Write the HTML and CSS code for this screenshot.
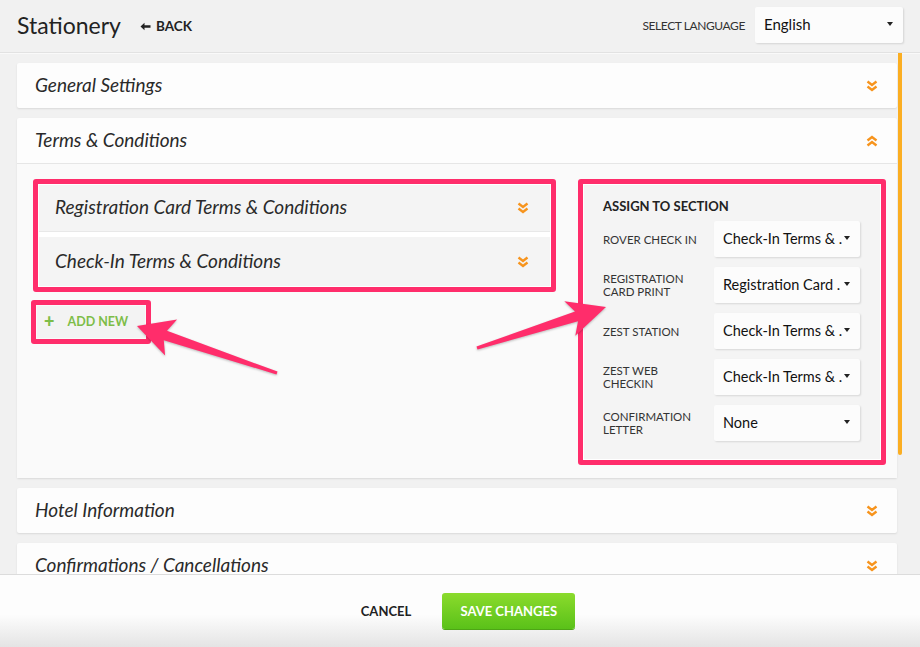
FILE: index.html
```html
<!doctype html>
<html>
<head>
  <meta charset="utf-8" />
  <title>Stationery</title>
  <link rel="stylesheet" href="styles.css">
</head>
<body>
  <div class="app">
    <header class="topbar">
      <div class="title-group">
        <h1>Stationery</h1>
        <a class="back" href="#">
          <svg width="11" height="9" viewBox="0 0 11 9"><path d="M0.5 4.5 L4.5 0.8 L4.5 3.3 L10.5 3.3 L10.5 5.7 L4.5 5.7 L4.5 8.2 Z" fill="#222"/></svg>
          BACK
        </a>
      </div>
      <div class="lang">
        <span class="lang-label">SELECT LANGUAGE</span>
        <div class="select lang-select"><span>English</span><i class="caret"></i></div>
      </div>
    </header>

    <main class="main">
      <div class="panels">
        <section class="panel">
          <div class="panel-head">
            <h2>General Settings</h2>
            <svg class="chev" viewBox="0 0 12 12"><path d="M1.5 1.5 L6 5 L10.5 1.5 M1.5 6.5 L6 10 L10.5 6.5"/></svg>
          </div>
        </section>

        <section class="panel open">
          <div class="panel-head">
            <h2>Terms &amp; Conditions</h2>
            <svg class="chev" viewBox="0 0 12 12"><path d="M1.5 5.5 L6 2 L10.5 5.5 M1.5 10.5 L6 7 L10.5 10.5"/></svg>
          </div>
          <div class="panel-body">
            <div class="left-col">
              <div class="mark list">
                <div class="item">
                  <span>Registration Card Terms &amp; Conditions</span>
                  <svg class="chev" viewBox="0 0 12 12"><path d="M1.5 1.5 L6 5 L10.5 1.5 M1.5 6.5 L6 10 L10.5 6.5"/></svg>
                </div>
                <div class="item">
                  <span>Check-In Terms &amp; Conditions</span>
                  <svg class="chev" viewBox="0 0 12 12"><path d="M1.5 1.5 L6 5 L10.5 1.5 M1.5 6.5 L6 10 L10.5 6.5"/></svg>
                </div>
              </div>
              <div class="mark add-wrap">
                <button class="add-new"><b>+</b>ADD NEW</button>
              </div>
            </div>

            <div class="mark assign">
              <div class="assign-inner">
                <h3>ASSIGN TO SECTION</h3>
                <div class="row"><label>ROVER CHECK IN</label><div class="select"><span>Check-In Terms &amp; .</span><i class="caret"></i></div></div>
                <div class="row"><label>REGISTRATION<br>CARD PRINT</label><div class="select"><span>Registration Card .</span><i class="caret"></i></div></div>
                <div class="row"><label>ZEST STATION</label><div class="select"><span>Check-In Terms &amp; .</span><i class="caret"></i></div></div>
                <div class="row"><label>ZEST WEB<br>CHECKIN</label><div class="select"><span>Check-In Terms &amp; .</span><i class="caret"></i></div></div>
                <div class="row"><label>CONFIRMATION<br>LETTER</label><div class="select"><span>None</span><i class="caret"></i></div></div>
              </div>
            </div>
          </div>
        </section>

        <section class="panel">
          <div class="panel-head">
            <h2>Hotel Information</h2>
            <svg class="chev" viewBox="0 0 12 12"><path d="M1.5 1.5 L6 5 L10.5 1.5 M1.5 6.5 L6 10 L10.5 6.5"/></svg>
          </div>
        </section>

        <section class="panel">
          <div class="panel-head">
            <h2>Confirmations / Cancellations</h2>
            <svg class="chev" viewBox="0 0 12 12"><path d="M1.5 1.5 L6 5 L10.5 1.5 M1.5 6.5 L6 10 L10.5 6.5"/></svg>
          </div>
        </section>
      </div>
      <div class="scroll-track"><div class="scroll-thumb"></div></div>
    </main>

    <footer class="footer">
      <button class="cancel">CANCEL</button>
      <button class="save">SAVE CHANGES</button>
    </footer>
  </div>

  <!-- annotation arrows -->
  <svg class="arrows" width="920" height="647" viewBox="0 0 920 647">
    <g fill="#ff2d6b">
      <polygon points="137,326 177.1,319.4 167,330.8 277.5,371.6 276.5,374.4 163.8,340.2 165.1,355.4"/>
      <polygon points="606,307 564.3,301.3 575,311.6 476.5,346.6 477.5,349.4 578,321.2 575.3,335.7"/>
    </g>
  </svg>
</body>
</html>
```

FILE: styles.css
```css
html, body {
  margin: 0;
  height: 100%;
}
body {
  font-family: Lato, "Open Sans", sans-serif;
  color: #222;
  background: #f1f1f1;
  position: relative;
  overflow: hidden;
}
.app {
  height: 647px;
  display: flex;
  flex-direction: column;
}

/* top bar */
.topbar {
  height: 50px;
  padding: 0 17px 2px;
  flex: none;
  display: flex;
  align-items: center;
  justify-content: space-between;
  border-bottom: 1px solid #e2e2e2;
  box-shadow: 0 1px 0 #f9f9f9;
}
.title-group {
  display: flex;
  align-items: center;
}
h1 {
  font-size: 23px;
  font-weight: 400;
  margin: 0 19px 0 0;
  color: #222;
}
.back {
  display: flex;
  align-items: center;
  gap: 5px;
  font-size: 13.5px;
  font-weight: 700;
  color: #222;
  text-decoration: none;
  margin-top: 2px;
}
.lang {
  display: flex;
  align-items: center;
  gap: 10px;
}
.lang-label {
  font-size: 12px;
  letter-spacing: -0.4px;
  color: #333;
}
.select {
  background: #fcfcfc;
  box-shadow: 1px 1px 2px rgba(0, 0, 0, 0.12);
  border-radius: 2px;
  height: 36px;
  display: flex;
  align-items: center;
  justify-content: space-between;
  padding: 0 10px 2px 9px;
  box-sizing: border-box;
  font-size: 14.5px;
  color: #111;
}
.lang-select {
  width: 148px;
  font-size: 15px;
}
.caret {
  width: 0;
  height: 0;
  border-left: 3px solid transparent;
  border-right: 3px solid transparent;
  border-top: 4px solid #222;
}

/* main area */
.main {
  flex: 1;
  overflow: hidden;
  display: flex;
  padding: 10px 0 0 17px;
}
.panels {
  width: 880px;
  flex: none;
  display: flex;
  flex-direction: column;
  gap: 10px;
}
.scroll-track {
  margin: -10px 0 0 1px;
  width: 4px;
}
.scroll-thumb {
  height: 402px;
  background: #fbae22;
  border-radius: 0 0 2px 2px;
}
.panel {
  background: #fdfdfd;
  border-radius: 2px;
  box-shadow: 0 1px 2px rgba(0, 0, 0, 0.1);
  flex: none;
}
.panel-head {
  height: 43px;
  display: flex;
  align-items: center;
  justify-content: space-between;
  padding: 0 19px 2px 18px;
}
.panel-head .chev {
  margin-top: 2px;
}
.panel.open .panel-head {
  border-bottom: 1px solid #e6e6e6;
}
h2 {
  margin: 0;
  font-size: 19px;
  font-weight: 400;
  font-style: italic;
  color: #2a2a2a;
}
.chev {
  width: 12px;
  height: 12px;
  fill: none;
  stroke: #f7941d;
  stroke-width: 2.4;
}
.panel-body {
  background: #fafafa;
  display: flex;
  justify-content: space-between;
  padding: 15px 11px 13px 16px;
}

/* pink annotation frames */
.mark {
  border: 5px solid #ff2d6b;
  border-radius: 3px;
  padding: 1px;
}
.left-col {
  width: 523px;
}
.list {
  background: #fff;
}
.item {
  height: 43px;
  padding: 0 21px 3px 16px;
  background: #f4f4f4;
  border-bottom: 1px solid #e8e8e8;
  display: flex;
  align-items: center;
  justify-content: space-between;
  font-size: 19px;
  font-style: italic;
  color: #2a2a2a;
}
.item .chev {
  margin-top: 3px;
}
.item + .item {
  margin-top: 5px;
  border-bottom: none;
  height: 47px;
  padding-bottom: 2px;
}
.add-wrap {
  display: inline-block;
  margin: 8px 0 0 -2px;
}
.add-new {
  border: none;
  background: #f3f3f3;
  font-family: inherit;
  font-size: 12.5px;
  font-weight: 700;
  color: #7dbd48;
  height: 32px;
  width: 108px;
  display: flex;
  align-items: center;
  padding: 0 0 2px 7px;
}
.add-new b {
  font-size: 18px;
  font-weight: 900;
  margin-right: 13px;
}
.assign {
  width: 296px;
  height: 274px;
  background: #fff;
}
.assign-inner {
  background: #f4f4f4;
  height: 100%;
  box-sizing: border-box;
  padding: 13px 20px 0 19px;
}
h3 {
  font-size: 13px;
  font-weight: 700;
  margin: 0 0 7px;
  color: #222;
}
.row {
  display: flex;
  align-items: center;
  margin-bottom: 10px;
}
.row label {
  width: 111px;
  font-size: 11.5px;
  line-height: 13px;
  color: #333;
}
.row .select {
  width: 146px;
}

/* footer */
.footer {
  height: 72px;
  flex: none;
  border-top: 1px solid #dcdcdc;
  background: linear-gradient(#fdfdfd 55%, #e4e4e4);
  display: flex;
  align-items: center;
  justify-content: center;
  gap: 15px;
}
.footer button {
  font-family: inherit;
  font-size: 13px;
  font-weight: 700;
  border: none;
  cursor: pointer;
}
.cancel {
  background: transparent;
  color: #222;
  padding: 0 16px;
}
.save {
  background: linear-gradient(#8bdb2c, #5ac119);
  color: #fff;
  height: 36px;
  width: 133px;
  border-radius: 3px;
  box-shadow: 0 1px 0 #4ea516;
}

.arrows {
  position: absolute;
  left: 0;
  top: 0;
  pointer-events: none;
  filter: drop-shadow(0 1px 1px rgba(0, 0, 0, 0.25));
}
```
